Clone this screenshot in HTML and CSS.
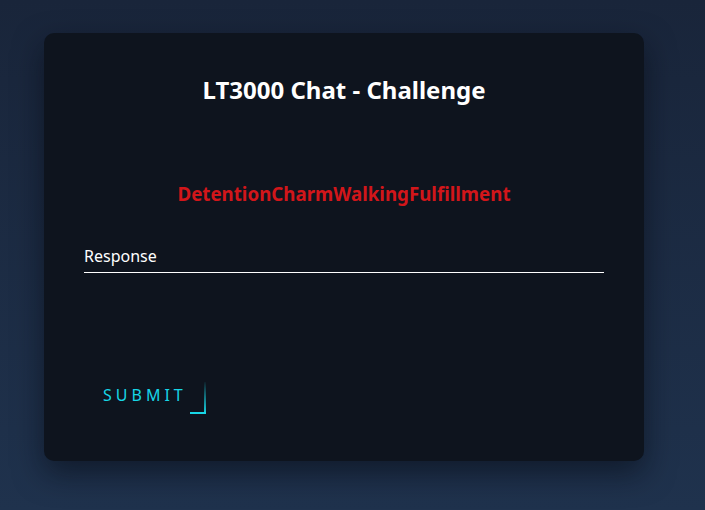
FILE: index.html
```html
<!DOCTYPE html>
<html>
<head>
<meta charset="utf-8">
<link rel="stylesheet" href="styles.css">
</head>
<body>
<div class="card">
  <h1 class="title">LT3000 Chat - Challenge</h1>
  <p class="challenge">DetentionCharmWalkingFulfillment</p>
  <label class="field">
    <span class="field-label">Response</span>
    <input class="field-input" type="text">
  </label>
  <div class="actions">
    <button class="submit" type="button">SUBMIT</button>
  </div>
</div>
</body>
</html>
```
FILE: styles.css
```css
html, body {
  margin: 0;
  height: 100%;
}
body {
  background: linear-gradient(180deg, #19253a 0%, #1f324d 100%);
  font-family: "Noto Sans", "Open Sans", sans-serif;
  padding: 33px 0 0 44px;
  box-sizing: border-box;
}
.card {
  width: 600px;
  height: 428px;
  box-sizing: border-box;
  background: #0e141e;
  border-radius: 10px;
  box-shadow: 0 12px 30px rgba(5, 10, 18, 0.55);
  padding: 40px 40px 0 40px;
  display: flex;
  flex-direction: column;
}
.title {
  margin: 0;
  text-align: center;
  color: #ffffff;
  font-size: 24px;
  line-height: 34px;
  font-weight: 700;
}
.challenge {
  margin: 74px 0 0 0;
  text-align: center;
  color: #d2161a;
  font-size: 18.72px;
  line-height: 26px;
  font-weight: 700;
}
.field {
  margin-top: 38px;
  display: flex;
  flex-direction: column;
  border-bottom: 1px solid #ffffff;
  padding-bottom: 5px;
}
.field-label {
  color: #ffffff;
  font-size: 16px;
  line-height: 22px;
}
.field-input {
  display: none;
}
.actions {
  margin-top: 109px;
  display: flex;
}
.submit {
  position: relative;
  box-sizing: border-box;
  background: transparent;
  border: none;
  color: #17d6e6;
  font-family: "Noto Sans", "Open Sans", sans-serif;
  font-size: 16px;
  letter-spacing: 4px;
  padding: 0 19px 6px 19px;
  height: 32px;
  line-height: 26px;
  cursor: pointer;
}
.submit::before {
  content: "";
  position: absolute;
  right: 0;
  bottom: 0;
  width: 16px;
  height: 2px;
  background: #17d6e6;
}
.submit::after {
  content: "";
  position: absolute;
  right: 0;
  bottom: 0;
  width: 2px;
  height: 32px;
  background: linear-gradient(180deg, rgba(23, 214, 230, 0.05) 0%, #17d6e6 100%);
}
```
